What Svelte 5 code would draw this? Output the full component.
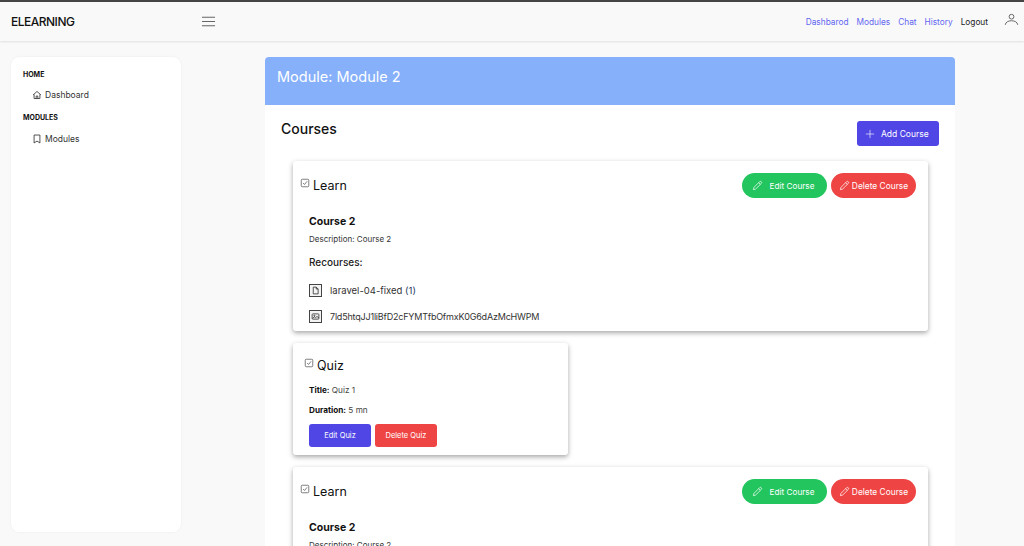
<script>
  const links = ['Dashbarod', 'Modules', 'Chat', 'History'];
</script>

{#snippet check()}
  <svg class="check" viewBox="0 0 24 24" fill="none" stroke="#555" stroke-width="1.8"><path d="M3 5.500a2.500 2.500 0 0 1 2.500-2.500h13a2.500 2.500 0 0 1 2.500 2.500v13a2.500 2.500 0 0 1-2.500 2.500h-13a2.500 2.500 0 0 1-2.500-2.500z"/><path d="M7.500 12l3.500 3.500 6-7.500"/></svg>
{/snippet}

{#snippet pencil()}
  <svg class="pencil" viewBox="0 0 24 24" fill="none" stroke="currentColor" stroke-width="1.6"><path d="M16.500 3.800a2.600 2.600 0 0 1 3.700 3.700L8 19.700l-5 1.300 1.300-5z"/><path d="M14.500 6l3.500 3.500"/></svg>
{/snippet}

{#snippet learn()}
  <div class="card learn">
    <div class="learn-head">
      <div class="card-title">{@render check()}<span>Learn</span></div>
      <div class="pills">
        <button class="pill green">{@render pencil()}<span class="edit-label">Edit Course</span></button>
        <button class="pill red">{@render pencil()}<span>Delete Course</span></button>
      </div>
    </div>
    <div class="learn-body">
      <h4>Course 2</h4>
      <p class="desc">Description: Course 2</p>
      <h5>Recourses:</h5>
      <div class="res">
        <span class="res-icon">
          <svg viewBox="0 0 24 24" fill="none" stroke="#333" stroke-width="2.200"><path d="M6 3h8l5 5v13H6z"/><path d="M14 3v5h5"/></svg>
        </span>
        <span class="res-text">laravel-04-fixed <span class="paren">(1)</span></span>
      </div>
      <div class="res">
        <span class="res-icon">
          <svg viewBox="0 0 24 24" fill="none" stroke="#333" stroke-width="2.200"><rect x="3" y="5" width="18" height="14" rx="2"/><circle cx="9" cy="10" r="1.500"/><path d="M4 17l5-4 3 2 4-3 5 4"/></svg>
        </span>
        <span class="res-text hash">7ld5htqJJ1liBfD2cFYMTfbOfmxK0G6dAzMcHWPM</span>
      </div>
    </div>
  </div>
{/snippet}

<div class="page">
  <header class="topbar">
    <div class="brand">ELEARNING</div>
    <button class="burger" aria-label="Menu">
      <svg viewBox="0 0 24 24" fill="none" stroke="#666" stroke-width="1.300"><path d="M3.750 6.750h16.500M3.750 12h16.500M3.750 17.250h16.500"/></svg>
    </button>
    <nav class="nav">
      {#each links as l}
        <a href="#top" class="nav-link">{l}</a>
      {/each}
      <a href="#top" class="logout">Logout</a>
      <svg class="user" viewBox="0 0 24 24" fill="none" stroke="#555" stroke-width="1.400"><circle cx="12" cy="7.500" r="3.800"/><path d="M2 20.500c.6-4.500 5-6.500 10-6.500s9.400 2 10 6.500"/></svg>
    </nav>
  </header>

  <div class="content">
    <aside class="sidebar">
      <div class="side-label">HOME</div>
      <div class="side-item">
        <svg viewBox="0 0 24 24" fill="none" stroke="#333" stroke-width="2"><path d="M2.500 12L12 3.500l9.500 8.500"/><path d="M5 10.500V20.500h14V10.500"/><path d="M10 20.500v-6h4v6"/></svg>
        <span>Dashboard</span>
      </div>
      <div class="side-label second">MODULES</div>
      <div class="side-item">
        <svg viewBox="0 0 24 24" fill="none" stroke="#333" stroke-width="2"><path d="M5 2.500h14v19l-7-4.500-7 4.500z"/></svg>
        <span>Modules</span>
      </div>
    </aside>

    <main class="main">
      <div class="banner">Module: Module 2</div>
      <div class="panel">
        <div class="panel-head">
          <h2>Courses</h2>
          <button class="add">
            <svg viewBox="0 0 24 24" fill="none" stroke="currentColor" stroke-width="1.500"><path d="M12 2v20M2 12h20"/></svg>
            <span>Add Course</span>
          </button>
        </div>

        {@render learn()}

        <div class="card quiz">
          <div class="card-title">{@render check()}<span>Quiz</span></div>
          <p class="meta"><b>Title:</b> Quiz 1</p>
          <p class="meta"><b>Duration:</b> 5 mn</p>
          <div class="quiz-actions">
            <button class="qbtn indigo">Edit Quiz</button>
            <button class="qbtn red">Delete Quiz</button>
          </div>
        </div>

        {@render learn()}
      </div>
    </main>
  </div>
</div>

<style>
  :global(body) {
    margin: 0;
    overflow: hidden;
    background: #f9f9f9;
  }
  .page {
    height: 546px;
    overflow: hidden;
    font-family: Inter, "Open Sans", sans-serif;
    color: #111;
    background: #f9f9f9;
  }
  button {
    font-family: inherit;
    border: 0;
    cursor: pointer;
  }
  .topbar {
    height: 39px;
    border-top: 2px solid #444;
    box-shadow: 0 1px 2px rgba(0, 0, 0, 0.1);
    display: flex;
    align-items: center;
    padding: 0 5px 0 11px;
    background: #f9f9f9;
  }
  .brand {
    font-size: 12px;
    font-weight: 500;
    width: 188px;
    letter-spacing: -0.5px;
  }
  .burger {
    width: 19px;
    height: 19px;
    padding: 0;
    background: none;
    display: flex;
  }
  .burger svg {
    width: 19px;
    height: 19px;
  }
  .nav {
    margin-left: auto;
    display: flex;
    align-items: center;
    font-size: 8.300px;
    gap: 8px;
  }
  .nav a {
    text-decoration: none;
  }
  .nav-link {
    color: #6366f1;
  }
  .logout {
    color: #222;
  }
  .user {
    width: 15px;
    height: 15px;
    margin-left: 8px;
    margin-top: -5px;
  }
  .content {
    display: flex;
    padding: 16px 69px 0 11px;
    align-items: flex-start;
  }
  .sidebar {
    width: 170px;
    height: 475px;
    flex: none;
    box-sizing: border-box;
    background: #fff;
    border-radius: 8px;
    box-shadow: 0 0 2px rgba(0, 0, 0, 0.08);
    padding: 13px 12px;
    font-size: 8.500px;
  }
  .side-label {
    font-size: 7px;
    font-weight: 700;
    line-height: 9px;
  }
  .side-label.second {
    margin-top: 12px;
  }
  .side-item {
    display: flex;
    align-items: center;
    gap: 3px;
    margin: 10px 0 0 9px;
    height: 12px;
    color: #333;
  }
  .side-label.second + .side-item {
    margin-top: 11px;
  }
  .side-item svg {
    width: 10px;
    height: 10px;
  }
  .main {
    width: 690px;
    flex: none;
    margin-left: 84px;
  }
  .banner {
    height: 39px;
    background: #86b0fa;
    color: #fff;
    border-radius: 4px 4px 0 0;
    font-size: 14.500px;
    padding: 9px 0 0 12px;
    line-height: 22px;
  }
  .panel {
    background: #fff;
    padding: 16px 16px 0 28px;
  }
  .panel-head {
    display: flex;
    justify-content: space-between;
    align-items: flex-start;
    height: 40px;
    margin-left: -12px;
  }
  h2 {
    margin: -1px 0 0;
    font-size: 14px;
    font-weight: 500;
    line-height: 17px;
  }
  .add {
    width: 82px;
    height: 25px;
    background: #4f46e5;
    color: #fff;
    border-radius: 3px;
    font-size: 8.500px;
    display: flex;
    align-items: center;
    gap: 6px;
    padding: 0 0 0 8px;
  }
  .add svg {
    width: 10px;
    height: 10px;
  }
  .card {
    background: #fff;
    border-radius: 3px;
    box-shadow: 0 2px 5px rgba(0, 0, 0, 0.35);
    box-sizing: border-box;
  }
  .learn {
    width: 635px;
    height: 170px;
    margin-bottom: 12px;
    padding: 12px;
  }
  .learn-head {
    display: flex;
    justify-content: space-between;
    align-items: center;
    height: 25px;
  }
  .card-title {
    display: flex;
    align-items: center;
    margin-left: -5px;
    font-size: 12.500px;
    color: #111;
    gap: 3px;
  }
  .check {
    width: 10px;
    height: 10px;
    margin-top: -5px;
  }
  .pills {
    display: flex;
    gap: 4px;
  }
  .pill {
    width: 85px;
    height: 25px;
    border-radius: 13px;
    color: #fff;
    font-size: 8.400px;
    display: flex;
    align-items: center;
    justify-content: center;
    gap: 2px;
    padding: 0;
  }
  .edit-label {
    margin-left: 5px;
    margin-right: 3px;
    font-size: 8.200px;
  }
  .pencil {
    width: 11px;
    height: 11px;
  }
  .green {
    background: #22c55e;
  }
  .red {
    background: #ef4444;
  }
  .learn-body {
    padding: 17px 0 0 4px;
  }
  h4 {
    margin: 0;
    font-size: 10.500px;
    font-weight: 700;
    line-height: 14px;
  }
  .desc {
    margin: 3px 0 0;
    font-size: 8px;
    line-height: 14px;
    color: #333;
  }
  h5 {
    margin: 9px 0 0;
    font-size: 10px;
    font-weight: 500;
    line-height: 14px;
    color: #222;
  }
  .res {
    display: flex;
    align-items: center;
    gap: 8px;
    height: 14px;
    margin-top: 12px;
    font-size: 9.500px;
    color: #333;
  }
  h5 + .res {
    margin-top: 14px;
  }
  .hash {
    font-size: 9px;
    letter-spacing: -0.2px;
  }
  .res-icon {
    width: 13px;
    height: 13px;
    box-sizing: border-box;
    border: 1px solid #444;
    background: #f3f3f3;
    display: flex;
    align-items: center;
    justify-content: center;
    flex: none;
  }
  .res-icon svg {
    width: 9px;
    height: 9px;
  }
  .paren {
    color: #1e3a5f;
  }
  .quiz {
    width: 275px;
    height: 112px;
    margin-bottom: 12px;
    padding: 15px 16px 0;
  }
  .meta {
    margin: 13px 0 0;
    font-size: 8.200px;
    line-height: 9px;
    color: #444;
  }
  .meta + .meta {
    margin-top: 11px;
  }
  .meta b {
    color: #111;
  }
  .quiz-actions {
    display: flex;
    gap: 4px;
    margin-top: 9px;
  }
  .qbtn {
    width: 62px;
    height: 23px;
    border-radius: 3px;
    color: #fff;
    font-size: 7.500px;
    padding: 0;
  }
  .indigo {
    background: #4f46e5;
  }
</style>
